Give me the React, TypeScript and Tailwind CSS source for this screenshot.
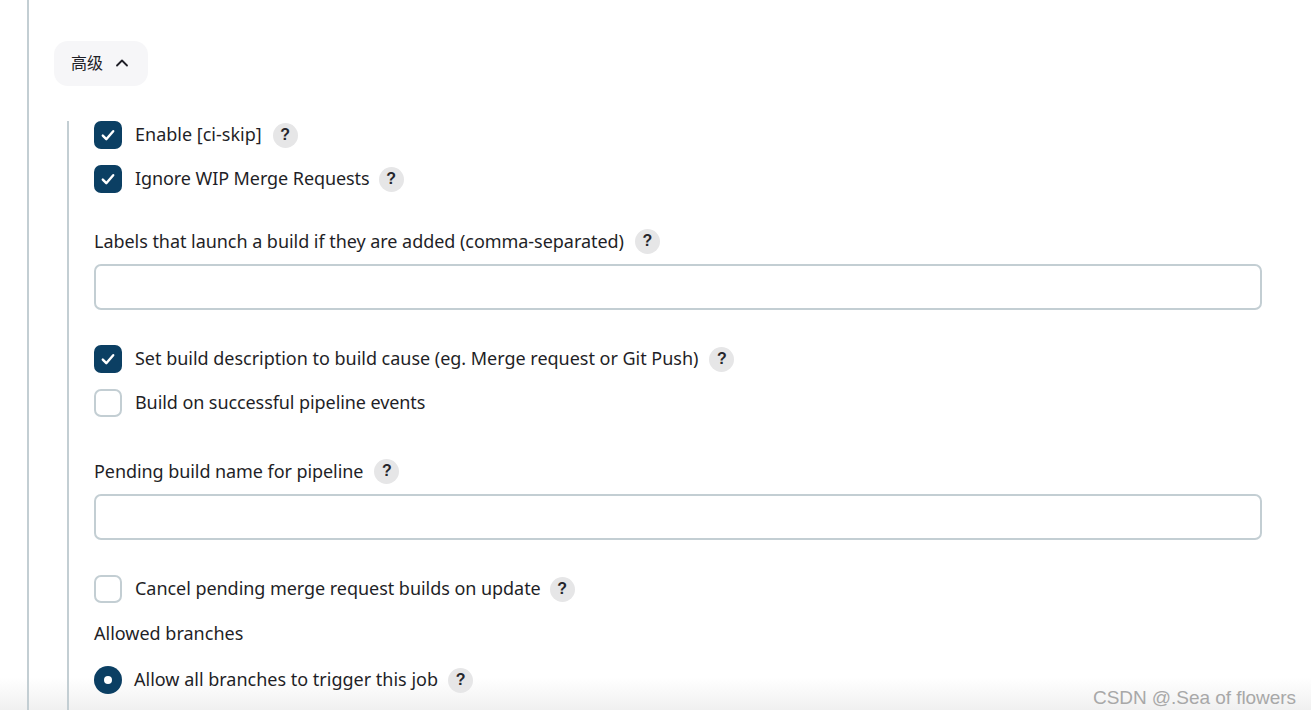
import React from "react";
import { ChevronUp } from "lucide-react";

const font = "font-['Noto_Sans','Noto_Sans_CJK_SC',sans-serif]";

function Help({ gap = "ml-[11px]" }: { gap?: string }) {
  return (
    <span className={`${gap} flex h-[25px] w-[25px] shrink-0 items-center justify-center rounded-full bg-[#e6e6e7] font-['Liberation_Sans',sans-serif] text-[16px] font-bold text-[#26262c]`}>
      ?
    </span>
  );
}

function Check({ label, checked, tracking }: { label: string; checked?: boolean; tracking?: string }) {
  return (
    <div className="flex h-[28px] items-center">
      {checked ? (
        <span className="flex h-[28px] w-[28px] shrink-0 items-center justify-center rounded-[7px] bg-[#0b3f63]">
          <svg width="16" height="16" viewBox="0 0 16 16" fill="none" stroke="white" strokeWidth="2.4" strokeLinecap="round" strokeLinejoin="round">
            <path d="M2.8 8.6 6.3 12.2 13.2 4.2" />
          </svg>
        </span>
      ) : (
        <span className="h-[28px] w-[28px] shrink-0 rounded-[7px] border-2 border-[#c3ced3] bg-white" />
      )}
      <span className={`ml-[13px] whitespace-nowrap pb-[2px] ${tracking ?? ""}`}>{label}</span>
    </div>
  );
}

function TextField({ label, tracking }: { label: string; tracking: string }) {
  return (
    <div>
      <div className="flex h-[26px] items-center whitespace-nowrap">
        <span className={tracking}>{label}</span>
        <Help />
      </div>
      <div className="mt-[10px] h-[46px] w-[1168px] rounded-[7px] border-2 border-[#c3ced3] bg-white" />
    </div>
  );
}

export default function App() {
  return (
    <div className={`relative h-[715px] w-[1311px] overflow-hidden bg-white text-[18px] leading-[26px] text-[#1f1f27] ${font}`}>
      {/* page fade sits behind the form */}
      <div className="absolute left-0 top-[678px] h-[32px] w-full bg-gradient-to-b from-white to-[#f0f0f0]" />
      <div className="relative ml-[27px] h-[710px] overflow-hidden border-l-2 border-[#c3ced3] pl-[25px] pt-[41px]">
        <button className="flex h-[45px] w-[94px] items-center rounded-[14px] bg-[#f6f6f8] pb-[1px] pl-[17px] text-[16px]">
          高级
          <ChevronUp className="ml-[9px] h-[20px] w-[20px]" strokeWidth={2.2} />
        </button>
        <div className="ml-[13px] mt-[35px] h-[600px] border-l-2 border-[#c3ced3] pl-[25px]">
          <div className="flex items-center">
            <Check label="Enable [ci-skip]" checked />
            <Help />
          </div>
          <div className="mt-[16px] flex items-center">
            <Check label="Ignore WIP Merge Requests" checked tracking="tracking-[-0.08px]" />
            <Help gap="ml-[9px]" />
          </div>
          <div className="mt-[35px]">
            <TextField label="Labels that launch a build if they are added (comma-separated)" tracking="tracking-[-0.045px]" />
          </div>
          <div className="mt-[35px] flex items-center">
            <Check label="Set build description to build cause (eg. Merge request or Git Push)" checked tracking="tracking-[-0.02px]" />
            <Help />
          </div>
          <div className="mt-[16px]">
            <Check label="Build on successful pipeline events" tracking="tracking-[-0.08px]" />
          </div>
          <div className="mt-[41px]">
            <TextField label="Pending build name for pipeline" tracking="tracking-[-0.07px]" />
          </div>
          <div className="mt-[35px] flex items-center">
            <Check label="Cancel pending merge request builds on update" tracking="tracking-[-0.045px]" />
            <Help gap="ml-[9px]" />
          </div>
          <div className="mt-[17px] h-[26px]">Allowed branches</div>
          <div className="mt-[20px] flex h-[28px] items-center">
            <span className="flex h-[28px] w-[28px] shrink-0 items-center justify-center rounded-full bg-[#0b3f63]">
              <span className="h-[8px] w-[8px] rounded-full bg-white" />
            </span>
            <span className="ml-[12px] whitespace-nowrap pb-[2px]">Allow all branches to trigger this job</span>
            <Help gap="ml-[10px]" />
          </div>
        </div>
      </div>
      <div className="absolute left-[1093px] top-[685px] whitespace-nowrap font-['Liberation_Sans',sans-serif] text-[19px] leading-[26px] tracking-[-0.05px] text-[#a8a8a8]">
        CSDN @.Sea of flowers
      </div>
    </div>
  );
}
